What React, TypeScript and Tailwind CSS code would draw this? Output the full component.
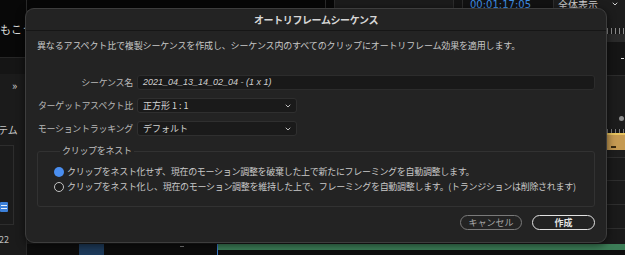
import { ChevronDown } from "lucide-react";

function Select({ value }: { value: string }) {
  return (
    <div className="flex h-[15px] w-[160px] items-center justify-between rounded-[3px] border border-[#2f2f2f] bg-[#1a1a1a] pl-[5px] pr-[4px]">
      <span className="whitespace-pre text-[9px] leading-none tracking-normal text-[#d2d2d2]">{value}</span>
      <ChevronDown size={8} strokeWidth={3} className="text-[#bdbdbd]" />
    </div>
  );
}

function Radio({ checked, label }: { checked?: boolean; label: string }) {
  return (
    <div className="flex h-[10px] items-center gap-[3px]">
      {checked ? (
        <span className="h-[10px] w-[10px] rounded-full bg-[#4a8ef0]" />
      ) : (
        <span className="h-[10px] w-[10px] rounded-full border-[1.5px] border-[#c4c4c4] bg-[#1c1c1c]" />
      )}
      <span className="whitespace-nowrap text-[9px] leading-[10px] text-[#c9c9c9]">{label}</span>
    </div>
  );
}

function Background() {
  return (
    <div className="flex h-full w-full">
      {/* project panel, mostly behind the dialog */}
      <div className="flex w-[27px] flex-col overflow-hidden border-r border-[#2a2a2a]">
        <div className="h-[57px] bg-[#080808] pt-[15px]">
          <span className="whitespace-nowrap text-[11px] leading-none text-[#dcdcdc]">もこう</span>
        </div>
        <div className="h-[17px] border-t border-[#262626] bg-[#151515]" />
        <div className="flex flex-1 flex-col bg-[#1b1b1b]">
          <span className="pl-[12px] pt-[6px] text-[11px] leading-none text-[#cfcfcf]">»</span>
          <span className="-ml-[2px] mt-[34px] whitespace-nowrap text-[10px] leading-none text-[#c8c8c8]">テム</span>
          <div className="-ml-[2px] mt-[10px] flex h-[80px] w-[16px] flex-col justify-end border border-[#2d2d2d] pb-[12px]">
            <span className="ml-[1px] flex h-[10px] w-[8px] flex-col justify-center gap-[2px] rounded-[1px] bg-[#3b7fd8] px-[1px]">
              <span className="h-[1px] bg-[#e6eefa]" />
              <span className="h-[1px] bg-[#e6eefa]" />
            </span>
          </div>
          <span className="-ml-[1px] mt-[10px] text-[9px] leading-none text-[#bdbdbd]">22</span>
        </div>
      </div>

      {/* timeline / monitor side */}
      <div className="flex flex-1 flex-col">
        <div className="flex h-[10px] overflow-hidden bg-[#070707]">
          <div className="w-[298px]" />
          <div className="w-[10px] border-x border-[#2a2a2a]" />
          <div className="w-[118px] bg-[#1b1b1b]" />
          <div className="w-[10px] border-x border-[#2c2c2c] bg-[#141414]" />
          <div className="flex w-[90px] items-end bg-[#121212] pl-[7px]">
            <span className="font-['DejaVu_Sans',sans-serif] text-[10px] leading-[10px] text-[#3f8fe6]">00:01:17:05</span>
          </div>
          <div className="flex flex-1 items-end justify-between border-l border-[#2e2e2e] bg-[#1d1d1d] pl-[4px] pr-[6px]">
            <span className="text-[10px] leading-[10px] text-[#cfcfcf]">全体表示</span>
            <ChevronDown size={8} strokeWidth={3} className="mb-[2px] text-[#cfcfcf]" />
          </div>
        </div>
        <div className="h-[18px] bg-[#1c1c1c]" />
        <div className="h-[6px] bg-[#1a1a1a] bg-[repeating-linear-gradient(90deg,#8a8a8a_0px,#8a8a8a_1px,transparent_1px,transparent_4px)]" />
        <div className="h-[8px] bg-[#2a2a2a]" />
        <div className="flex h-[33px] items-center justify-end bg-[#151515] pr-[1px]">
          <span className="h-[1px] w-[3px] bg-[#e0e0e0]" />
        </div>
        <div className="flex h-[54px] items-end justify-end border-t border-[#2c2c2c] bg-[#1c1c1c] pb-[8px] pr-[1px]">
          <span className="h-[5px] w-[5px] rounded-full bg-[#8d8d8d]" />
        </div>
        <div className="h-[4px] bg-[#161616] bg-[repeating-linear-gradient(90deg,#777_0px,#777_1px,transparent_1px,transparent_4px)]" />
        <div className="flex h-[17px]">
          <div className="w-[190px] bg-[#181818]" />
          <div className="flex flex-1 items-end border-t-[2px] border-[#e8c35e] bg-[#c59a52] pb-[2px]">
            <span className="ml-auto mr-[9px] h-[2px] w-[5px] bg-[#3a2a10]" />
          </div>
        </div>
        <div className="h-[7px] bg-[#1d1d1d]" />
        <div className="h-[23px] border-t border-[#2e2e2e] bg-[#1a1a1a]" />
        <div className="h-[24px] border-t border-[#2e2e2e] bg-[#1a1a1a]" />
        <div className="h-[24px] border-t border-[#2e2e2e] bg-[#1a1a1a]" />
        <div className="h-[16px] border-t border-[#2e2e2e] bg-[#1a1a1a]" />
        <div className="flex flex-1">
          <div className="flex w-[190px] bg-[#0d0d0d]">
            <span className="ml-[52px] h-full w-[25px] bg-[#1d3a5a]" />
            <span className="ml-[76px] mt-[2px] h-[1px] w-[4px] bg-[#777]" />
          </div>
          <div className="flex-1 border-l border-[#3a78c8] bg-[#0e0e0e]">
            <div className="h-[6px] bg-[#3c7d57]" />
          </div>
        </div>
      </div>
    </div>
  );
}

export default function App() {
  return (
    <div className="relative h-[255px] w-[625px] overflow-hidden bg-[#0b0b0b] font-['Noto_Sans_CJK_JP','Noto_Sans',sans-serif]">
      <Background />

      <div className="absolute left-[25px] top-[8px] flex h-[235px] w-[582px] flex-col rounded-[9px] border border-[#3d3d3d] bg-[#232323] shadow-[0_2px_8px_rgba(0,0,0,0.6)]">
        <div className="flex h-[22px] shrink-0 items-center justify-center border-b border-[#161616]">
          <span className="text-[10px] font-bold leading-none tracking-[-0.4px] text-[#d6d6d6]">
            オートリフレームシーケンス
          </span>
        </div>

        <div className="flex flex-1 flex-col px-[11px]">
          <p className="mt-[10px] whitespace-nowrap text-[9px] leading-[10px] tracking-[-0.15px] text-[#c8c8c8]">
            異なるアスペクト比で複製シーケンスを作成し、シーケンス内のすべてのクリップにオートリフレーム効果を適用します。
          </p>

          <div className="mt-[24px] grid grid-cols-[96px_1fr] items-center gap-x-[4px] gap-y-[8px] text-[9px] tracking-[-0.3px]">
            <span className="text-right leading-none text-[#b8b8b8]">シーケンス名</span>
            <div className="flex h-[15px] items-center rounded-[3px] border border-[#2c2c2c] bg-[#191919] pl-[5px]">
              <span className="font-['Liberation_Sans',sans-serif] text-[9px] italic leading-none tracking-normal text-[#d0d0d0]">
                2021_04_13_14_02_04 - (1 x 1)
              </span>
            </div>

            <span className="whitespace-nowrap text-right leading-none text-[#b8b8b8]">ターゲットアスペクト比</span>
            <Select value="正方形 1 : 1" />

            <span className="whitespace-nowrap text-right leading-none text-[#b8b8b8]">モーショントラッキング</span>
            <Select value="デフォルト" />
          </div>

          <fieldset className="mt-[10px] rounded-[3px] border border-[#323232] pb-[14px] pl-[16px]">
            <legend className="ml-[6px] px-[2px] text-[9px] leading-[10px] tracking-[-0.3px] text-[#c0c0c0]">
              クリップをネスト
            </legend>
            <div className="mt-[11px] flex flex-col gap-[5px] tracking-[-0.3px]">
              <Radio checked label="クリップをネスト化せず、現在のモーション調整を破棄した上で新たにフレーミングを自動調整します。" />
              <Radio label="クリップをネスト化し、現在のモーション調整を維持した上で、フレーミングを自動調整します。(トランジションは削除されます)" />
            </div>
          </fieldset>

          <div className="mt-[8px] flex justify-end gap-[10px]">
            <button className="flex h-[15px] w-[62px] items-center justify-center rounded-full border-[1.5px] border-[#7a7a7a] text-[9px] leading-none text-[#a8a8a8]">
              キャンセル
            </button>
            <button className="flex h-[15px] w-[63px] items-center justify-center rounded-full border-[1.5px] border-[#e2e2e2] text-[9px] font-bold leading-none text-[#e2e2e2]">
              作成
            </button>
          </div>
        </div>
      </div>
    </div>
  );
}
